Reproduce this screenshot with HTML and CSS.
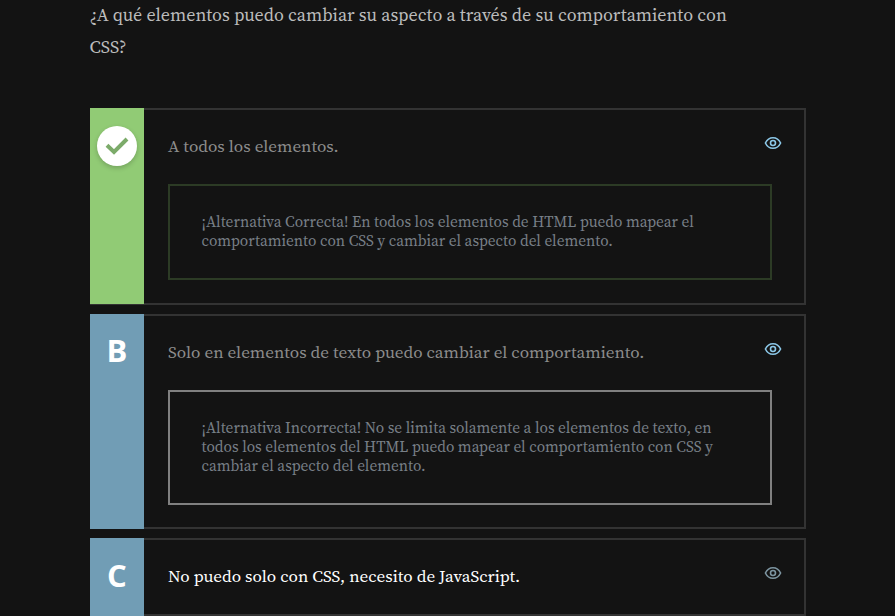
FILE: index.html
```html
<!DOCTYPE html>
<html lang="es">
<head>
<meta charset="utf-8">
<title>Cuestionario CSS</title>
<link rel="stylesheet" href="styles.css">
</head>
<body>
<svg class="symbols" aria-hidden="true">
  <symbol id="eye" viewBox="0 0 18 14">
    <path d="M1.4 7C3.1 3.4 5.8 1.7 9 1.7S14.9 3.4 16.6 7C14.9 10.6 12.2 12.3 9 12.3S3.1 10.6 1.4 7Z"/>
    <circle cx="9" cy="7" r="2.5"/>
  </symbol>
</svg>
<main class="quiz">
  <p class="question">¿A qué elementos puedo cambiar su aspecto a través de su comportamiento con<br>CSS?</p>
  <ul class="options">
    <li class="option correct">
      <div class="badge"><span class="tick"><svg viewBox="0 0 24 18"><path d="M2 8.3L9 15L22 2"/></svg></span></div>
      <div class="body">
        <div class="head"><span class="label">A todos los elementos.</span><svg class="eye"><use href="#eye"/></svg></div>
        <p class="note good">¡Alternativa Correcta! En todos los elementos de HTML puedo mapear el<br>comportamiento con CSS y cambiar el aspecto del elemento.</p>
      </div>
    </li>
    <li class="option wrong">
      <div class="badge">B</div>
      <div class="body">
        <div class="head"><span class="label">Solo en elementos de texto puedo cambiar el comportamiento.</span><svg class="eye"><use href="#eye"/></svg></div>
        <p class="note">¡Alternativa Incorrecta! No se limita solamente a los elementos de texto, en<br>todos los elementos del HTML puedo mapear el comportamiento con CSS y<br>cambiar el aspecto del elemento.</p>
      </div>
    </li>
    <li class="option pending">
      <div class="badge">C</div>
      <div class="body">
        <div class="head"><span class="label">No puedo solo con CSS, necesito de JavaScript.</span><svg class="eye"><use href="#eye"/></svg></div>
      </div>
    </li>
  </ul>
</main>
</body>
</html>
```
FILE: styles.css
```css
* { box-sizing: border-box; }
body {
  margin: 0;
  height: 616px;
  overflow: hidden;
  background: #131313;
  font-family: "Source Serif Pro", "Source Serif 4", "Liberation Serif", serif;
}
.symbols { position: absolute; width: 0; height: 0; }
.quiz {
  display: flow-root;
  width: 716px;
  margin-left: 90px;
}
.question {
  margin: -1px 0 0 -0.5px;
  height: 109px;
  font-size: 18px;
  line-height: 32px;
  color: #bcbcbc;
  white-space: nowrap;
}
.options {
  margin: 0;
  padding: 0;
  list-style: none;
  display: flex;
  flex-direction: column;
  gap: 9px;
}
.option { display: flex; }
.badge {
  width: 54px;
  flex: none;
  padding-top: 15px;
  background: #719db5;
  color: #fff;
  font: bold 31px/42px "Open Sans", sans-serif;
  text-align: center;
}
.correct .badge {
  background: #91cb75;
  padding-top: 18px;
  border-bottom: 1px solid #333;
}
.pending .badge { padding-top: 16px; }
.tick {
  display: flex;
  align-items: center;
  justify-content: center;
  width: 40px;
  height: 40px;
  margin: 0 auto;
  border-radius: 50%;
  background: #fff;
  box-shadow: 0 2px 5px rgba(0, 0, 0, .2);
}
.tick svg { width: 24px; height: 18px; fill: none; stroke: #7cab6a; stroke-width: 4; }
.body {
  flex: 1;
  border: 2px solid #333;
  border-left: 0;
  padding: 0 22px 23px 24px;
}
.wrong .body { padding-bottom: 22px; }
.head {
  display: flex;
  justify-content: space-between;
  height: 74px;
  padding-top: 20px;
}
.pending .head { height: 51px; }
.label { font-size: 17.1px; line-height: 32px; color: #8c8c8c; white-space: nowrap; }
.pending .label { color: #fff; }
.eye {
  width: 18px;
  height: 14px;
  margin-top: 6px;
  fill: none;
  stroke: #8cc8e8;
  stroke-width: 1.6;
}
.pending .eye { stroke: #7d95a1; }
.note {
  width: 604px;
  margin: 0;
  border: 2px solid #808080;
  padding: 26px 31.5px 28px;
  font-size: 15.3px;
  line-height: 19px;
  color: #787f87;
  white-space: nowrap;
}
.good { border-color: #2c3b25; }
```
